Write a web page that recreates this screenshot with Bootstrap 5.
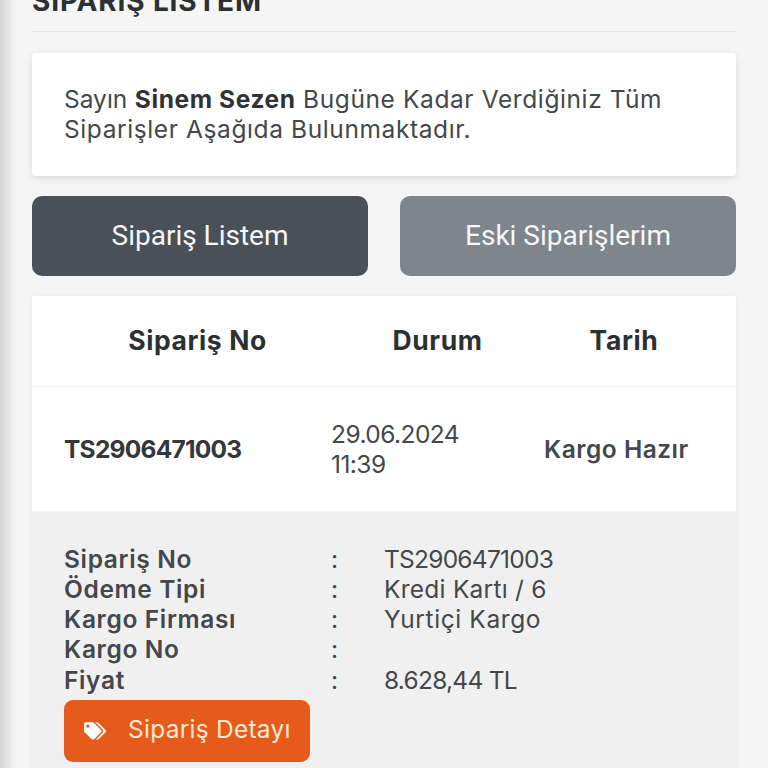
<!doctype html>
<html lang="tr">
<head>
<meta charset="utf-8">
<title>Sipariş Listem</title>
<link href="https://cdn.jsdelivr.net/npm/bootstrap@5.3.0/dist/css/bootstrap.min.css" rel="stylesheet">
<style>
html,body{height:768px;overflow:hidden}
body{background:#f5f5f6;font-family:"Inter","Liberation Sans",sans-serif;color:#44474b;font-size:24.5px;line-height:30px;letter-spacing:.6px}
.side-shade{width:32px;flex:none;background:linear-gradient(90deg,#d4d4d4 0,#e4e4e4 8px,#f3f3f3 14px,#f5f5f6 20px)}
.page-col{width:704px;flex:none}
.page-title{height:32px;border-bottom:1px solid #e3e4e5;display:flex;align-items:flex-end;overflow:hidden}
.page-title h1{font-size:28px;line-height:30px;font-weight:700;color:#2d3033;margin:0 0 15px;letter-spacing:.85px}
.intro-box{margin-top:21px;height:123px;padding:31px 32px;background:#fff;border-radius:4px;box-shadow:0 2px 6px rgba(0,0,0,.12)}
.intro-box .greet{letter-spacing:0}
.intro-box b{font-weight:700;color:#2f3236}
.tab-row{margin-top:20px;gap:32px}
.tab-btn{flex:1 1 0;height:80px;border-radius:10px;border:0;color:#f6f7f8;font-family:Roboto,"Liberation Sans",sans-serif;font-size:28px;letter-spacing:0;line-height:76px;text-align:center;padding:0}
.tab-dark{background:#495057}
.tab-grey{background:#7e858b}
.order-box{margin-top:20px;background:#fff;box-shadow:0 0 6px rgba(0,0,0,.05)}
.order-grid{display:grid;grid-template-columns:267px 213px 160px;padding:0 32px}
.order-head{height:91px;align-items:center;text-align:center;font-weight:700;font-size:26.5px;color:#2d3033;border-bottom:1px solid #f3f3f4;padding-bottom:2px}
.order-row{height:125px;align-items:center;border-bottom:1px solid #f3f3f4}
.order-row .no{font-weight:700;color:#34373b;letter-spacing:-.75px}
.order-row .st{font-weight:600;letter-spacing:.5px}
.order-row .dt{letter-spacing:-.55px}
.detail-box{background:#f0f0f1;padding:32px 32px 40px}
.detail-line{display:grid;grid-template-columns:267px 53px 1fr;height:30.13px}
.detail-line .lbl{font-weight:600;letter-spacing:.65px}
.detail-line .num{letter-spacing:-.75px}
.detail-line .mid{letter-spacing:.25px}
.detail-btn{margin-top:5px;width:246px;height:62px;background:#e65a1c;border:0;border-radius:9px;color:#ffe9d2;padding:0 0 3px 20px;display:flex;align-items:center;font-size:24.5px;letter-spacing:.25px}
.detail-btn svg{width:22px;height:18px;fill:#fff;margin:3px 22px 0 0;flex:none}
</style>
</head>
<body>
<div class="d-flex">
  <div class="side-shade"></div>
  <main class="page-col">
    <div class="page-title"><h1>SİPARİŞ LİSTEM</h1></div>
    <div class="intro-box"><span class="greet">Sayın</span> <b>Sinem Sezen</b> Bugüne Kadar Verdiğiniz Tüm Siparişler Aşağıda Bulunmaktadır.</div>
    <div class="d-flex tab-row">
      <button class="btn tab-btn tab-dark" type="button">Sipariş Listem</button>
      <button class="btn tab-btn tab-grey" type="button">Eski Siparişlerim</button>
    </div>
    <section class="order-box">
      <div class="order-grid order-head"><div>Sipariş No</div><div>Durum</div><div>Tarih</div></div>
      <div class="order-grid order-row"><div class="no">TS2906471003</div><div class="dt">29.06.2024<br>11:39</div><div class="st">Kargo Hazır</div></div>
      <div class="detail-box">
        <div class="detail-line"><span class="lbl">Sipariş No</span><span>:</span><span class="num">TS2906471003</span></div>
        <div class="detail-line"><span class="lbl">Ödeme Tipi</span><span>:</span><span class="mid">Kredi Kartı / 6</span></div>
        <div class="detail-line"><span class="lbl">Kargo Firması</span><span>:</span><span>Yurtiçi Kargo</span></div>
        <div class="detail-line"><span class="lbl">Kargo No</span><span>:</span><span></span></div>
        <div class="detail-line"><span class="lbl">Fiyat</span><span>:</span><span class="num">8.628,44 TL</span></div>
        <button class="btn detail-btn" type="button"><svg viewBox="0 0 640 512" aria-hidden="true"><path d="M497.941 225.941L286.059 14.059A48 48 0 0 0 252.118 0H48C21.49 0 0 21.49 0 48v204.118a48 48 0 0 0 14.059 33.941l211.882 211.882c18.744 18.745 49.136 18.746 67.882 0l204.118-204.118c18.745-18.745 18.745-49.137 0-67.882zM112 160c-26.51 0-48-21.49-48-48s21.49-48 48-48 48 21.49 48 48-21.49 48-48 48zm513.941 133.823L421.823 497.941c-18.745 18.745-49.137 18.745-67.882 0l-.36-.36L527.64 323.522c16.999-16.999 26.36-39.6 26.36-63.64s-9.362-46.641-26.36-63.64L331.397 0h48.721a48 48 0 0 1 33.941 14.059l211.882 211.882c18.745 18.745 18.745 49.137 0 67.882z"/></svg>Sipariş Detayı</button>
      </div>
    </section>
  </main>
</div>
<script src="https://cdn.jsdelivr.net/npm/bootstrap@5.3.0/dist/js/bootstrap.bundle.min.js"></script>
</body>
</html>
